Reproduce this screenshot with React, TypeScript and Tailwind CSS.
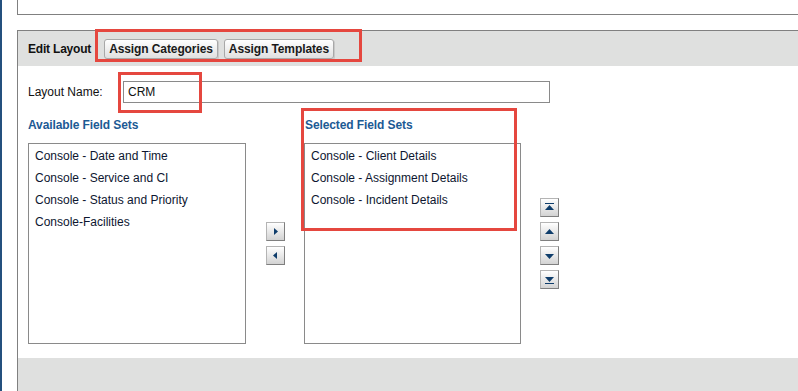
import React from 'react';

const available = [
  'Console - Date and Time',
  'Console - Service and CI',
  'Console - Status and Priority',
  'Console-Facilities',
];

const selected = [
  'Console - Client Details',
  'Console - Assignment Details',
  'Console - Incident Details',
];

type Icon = 'right' | 'left' | 'top' | 'up' | 'down' | 'bottom';

const ArrowButton: React.FC<{ icon: Icon }> = ({ icon }) => (
  <button className="w-[19px] h-[19px] border border-[#b4b4b4] border-r-[#7f7f7f] border-b-[#7f7f7f] bg-linear-to-b from-white to-[#d3d3d3] flex items-center justify-center p-0">
    <svg width="17" height="17" viewBox="0 0 17 17" fill="#0f3d6b">
      {icon === 'right' && <polygon points="7,5 11,8.5 7,12" />}
      {icon === 'left' && <polygon points="10,5 6,8.5 10,12" />}
      {icon === 'top' && (
        <>
          <rect x="4" y="4" width="9" height="1" />
          <polygon points="8.5,6 13,11 4,11" />
        </>
      )}
      {icon === 'up' && <polygon points="8.5,6 13,11 4,11" />}
      {icon === 'down' && <polygon points="4,7 13,7 8.5,12" />}
      {icon === 'bottom' && (
        <>
          <polygon points="4,6 13,6 8.5,11" />
          <rect x="4" y="12" width="9" height="1" />
        </>
      )}
    </svg>
  </button>
);

const HeaderButton: React.FC<{ label: string }> = ({ label }) => (
  <button className="h-[20px] px-[4px] border border-[#a8a8a8] rounded-[3px] bg-linear-to-b from-white to-[#e0e0e0] shadow-[1px_1px_0_#c8c8c8] text-[12px] font-bold text-[#1a1a1a] leading-none tracking-[-0.1px]">
    {label}
  </button>
);

const App: React.FC = () => {
  return (
    <div className="relative w-[798px] h-[391px] overflow-hidden bg-white flex font-['Liberation_Sans',Arial,sans-serif] text-[#111]">
      <div className="w-[2px] shrink-0 bg-[#24507e]"></div>
      <div className="w-[15px] shrink-0"></div>

      <div className="flex flex-col flex-1 min-w-0">
        {/* box above, only its bottom shows */}
        <div className="h-[15px] w-[900px] border-l border-b border-[#808080]"></div>
        <div className="h-[15px]"></div>

        <div className="flex flex-col flex-1 w-[900px] border-l border-t border-[#808080]">
          <div className="h-[35px] bg-[#dfe0df] flex items-center pl-[10px] gap-[6px]">
            <span className="text-[12px] font-bold mr-[7px] tracking-[-0.2px]">Edit Layout</span>
            <HeaderButton label="Assign Categories" />
            <HeaderButton label="Assign Templates" />
          </div>

          <div className="h-[292px] bg-white pl-[10px] pt-[15px]">
            <div className="flex items-center">
              <span className="w-[95px] text-[12px]">Layout Name:</span>
              <div className="w-[427px] h-[22px] border border-[#8a8a8a] flex items-center pl-[4px] text-[12px]">CRM</div>
            </div>

            <div className="flex mt-[14px]">
              <div className="w-[218px]">
                <div className="text-[12px] font-bold text-[#1c5a94] leading-[16px] tracking-[-0.1px]">Available Field Sets</div>
                <div className="mt-[10px] h-[201px] border border-[#8a8a8a] pl-[6px] pt-[1px] text-[12px] leading-[22px] text-[#0d1630]">
                  {available.map(a => (
                    <div key={a}>{a}</div>
                  ))}
                </div>
              </div>

              <div className="w-[58px] self-end h-[201px] flex flex-col items-center justify-center gap-[5px]">
                <ArrowButton icon="right" />
                <ArrowButton icon="left" />
              </div>

              <div className="w-[217px]">
                <div className="text-[12px] font-bold text-[#1c5a94] leading-[16px] pl-[1px] tracking-[-0.1px]">Selected Field Sets</div>
                <div className="mt-[10px] h-[201px] border border-[#8a8a8a] pl-[6px] pt-[1px] text-[12px] leading-[22px] text-[#0d1630]">
                  {selected.map(s => (
                    <div key={s}>{s}</div>
                  ))}
                </div>
              </div>

              <div className="ml-[19px] self-end h-[201px] flex flex-col justify-center gap-[5px]">
                <ArrowButton icon="top" />
                <ArrowButton icon="up" />
                <ArrowButton icon="down" />
                <ArrowButton icon="bottom" />
              </div>
            </div>
          </div>

          <div className="flex-1 bg-[#dfe0df]"></div>
        </div>
      </div>

      {/* red highlight marks */}
      <div className="absolute left-[95px] top-[29px] w-[267px] h-[33px] border-[3px] border-[#e5473f]"></div>
      <div className="absolute left-[118px] top-[72px] w-[84px] h-[41px] border-[3px] border-[#e5473f]"></div>
      <div className="absolute left-[301px] top-[108px] w-[216px] h-[123px] border-[3px] border-[#e5473f]"></div>
    </div>
  );
};

export default App;
